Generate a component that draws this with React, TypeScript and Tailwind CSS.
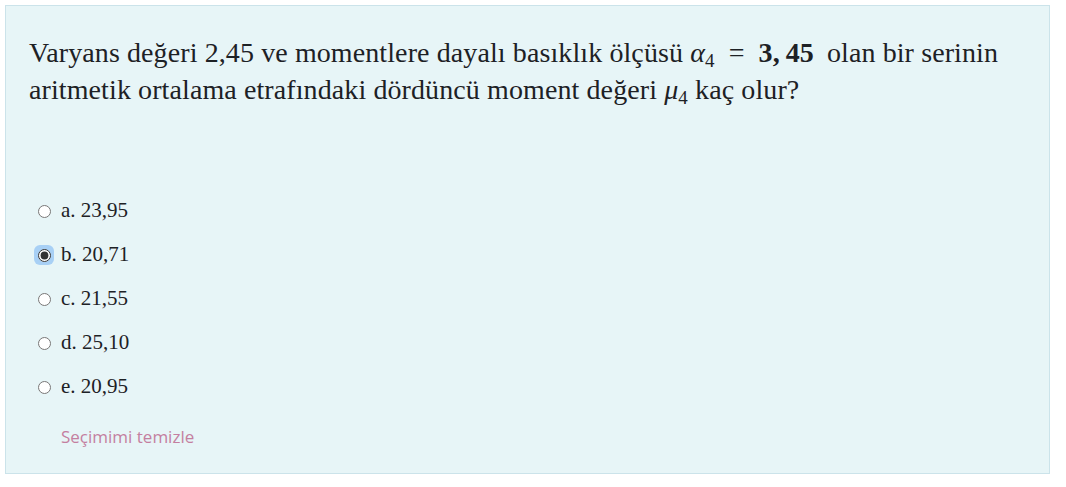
import { useState } from "react";

const options = [
  { key: "a", text: "23,95" },
  { key: "b", text: "20,71" },
  { key: "c", text: "21,55" },
  { key: "d", text: "25,10" },
  { key: "e", text: "20,95" },
];

export default function App() {
  const [picked, setPicked] = useState<string | null>("b");

  return (
    <div className="w-[1066px] h-[487px] bg-white pt-[5px] pl-[5px]">
      <div className="w-[1045px] h-[469px] bg-[#e7f5f7] border border-[#cbe3ea] pl-[23px] pt-[28px] font-['Liberation_Serif',serif] text-[#1d2125]">
        <div className="text-[28px] leading-[37px] tracking-[0.1px]">
          Varyans değeri 2,45 ve momentlere dayalı basıklık ölçüsü{" "}
          <span className="italic">α</span>
          <sub className="text-[19px] leading-none">4</sub>
          <span className="mx-[14px]">=</span>
          <span className="font-bold">3,</span>
          <span className="ml-[6px] font-bold">45</span>
          <span className="ml-[13px]">olan bir serinin</span>
          <br />
          aritmetik ortalama etrafındaki dördüncü moment değeri{" "}
          <span className="italic">μ</span>
          <sub className="text-[19px] leading-none">4</sub> kaç olur?
        </div>

        <div className="mt-[91px] flex flex-col gap-[20px] pl-[5px]">
          {options.map((o) => (
            <label key={o.key} className="flex items-center h-[24px] cursor-pointer">
              <span
                className={
                  picked === o.key
                    ? "w-[20px] h-[20px] rounded-[6px] bg-[#a8d0f5] flex items-center justify-center"
                    : "w-[20px] h-[20px] flex items-center justify-center"
                }
              >
                <input
                  type="radio"
                  name="q"
                  checked={picked === o.key}
                  onChange={() => setPicked(o.key)}
                  className="w-[13px] h-[13px] m-0 accent-[#333]"
                />
              </span>
              <span className="ml-[7px] text-[21px]">
                {o.key}. {o.text}
              </span>
            </label>
          ))}
        </div>

        <button
          onClick={() => setPicked(null)}
          className="mt-[25px] ml-[32px] text-[17px] text-[#c47fa0] font-['Open_Sans',sans-serif]"
        >
          Seçimimi temizle
        </button>
      </div>
    </div>
  );
}
